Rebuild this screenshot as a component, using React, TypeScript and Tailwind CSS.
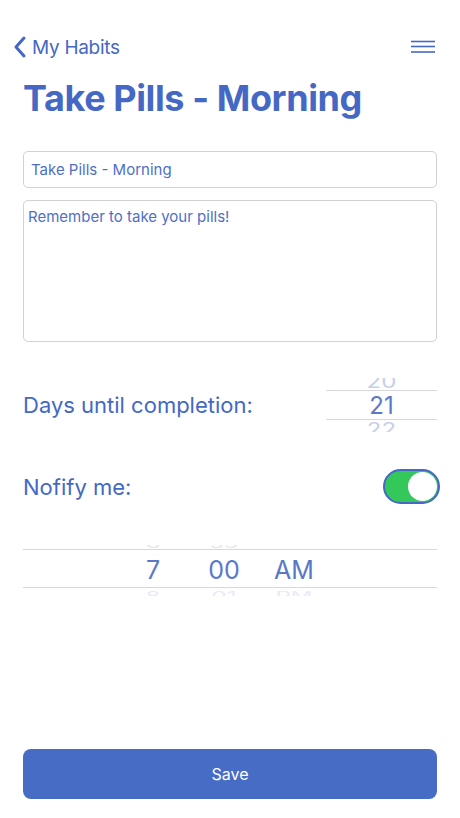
import React, { useState } from "react"

// -------------------------------------------------------------------
// Small pieces
// -------------------------------------------------------------------

function BackChevron() {
  return (
    <svg width="14" height="24" viewBox="0 0 14 24" fill="none">
      <polyline
        points="11,3 3,12 11,21"
        stroke="#4468c4"
        strokeWidth="3"
        strokeLinecap="round"
        strokeLinejoin="round"
      />
    </svg>
  )
}

function MenuIcon() {
  return (
    <svg width="26" height="16" viewBox="0 0 26 16" fill="none">
      <line x1="1" y1="2.5" x2="25" y2="2.5" stroke="#4468c4" strokeWidth="1.6" />
      <line x1="1" y1="7.5" x2="25" y2="7.5" stroke="#4468c4" strokeWidth="1.6" />
      <line x1="1" y1="13" x2="25" y2="13" stroke="#4468c4" strokeWidth="1.6" />
    </svg>
  )
}

function Toggle({ on, onChange }: { on: boolean; onChange: () => void }) {
  return (
    <button
      onClick={onChange}
      className={`flex h-[35px] w-[57px] items-center rounded-full border-2 border-[#4468c4] p-[1px] ${
        on ? "justify-end bg-[#34c759]" : "justify-start bg-[#e5e5ea]"
      }`}
    >
      <span className="block h-[29px] w-[29px] rounded-full bg-white" />
    </button>
  )
}

// --- Wheel picker columns ---------------------------------------------

interface WheelProps {
  prev: string
  current: string
  next: string
  className?: string
}

function Wheel({ prev, current, next, className = "" }: WheelProps) {
  return (
    <div className={`flex flex-col items-center ${className}`}>
      <div className="flex h-[13px] items-end overflow-hidden">
        <span className="origin-bottom scale-y-75 text-[24px] leading-[24px] text-[#c7d0ea]">
          {prev}
        </span>
      </div>
      <div className="flex h-[30px] items-center">
        <span className="text-[24px] leading-[24px] text-[#5a78c8]">{current}</span>
      </div>
      <div className="flex h-[11px] items-start overflow-hidden">
        <span className="origin-top scale-y-75 text-[24px] leading-[24px] text-[#c7d0ea]">
          {next}
        </span>
      </div>
    </div>
  )
}

function TimeCol({ prev, current, next, className = "" }: WheelProps) {
  return (
    <div className={`flex flex-col items-center ${className}`}>
      <div className="flex h-[5px] items-end overflow-hidden">
        <span className="origin-bottom scale-y-50 text-[24px] leading-[24px] text-[#e1e5f3]">
          {prev || "\u00a0"}
        </span>
      </div>
      <div className="flex h-[40px] items-center">
        <span className="text-[25px] leading-[25px] text-[#5a78c8]">{current}</span>
      </div>
      <div className="flex h-[6px] items-start overflow-hidden">
        <span className="origin-top scale-y-50 text-[24px] leading-[24px] text-[#e8ebf6]">
          {next}
        </span>
      </div>
    </div>
  )
}

// -------------------------------------------------------------------
// Component
// -------------------------------------------------------------------

export default function App() {
  const [title, setTitle] = useState("Take Pills - Morning")
  const [notes, setNotes] = useState("Remember to take your pills!")
  const [notify, setNotify] = useState(true)

  return (
    <div className="flex h-[818px] w-[460px] flex-col bg-white font-['Inter','Liberation_Sans',sans-serif] text-[#4468c4]">
      {/* Nav bar */}
      <div className="mt-[35px] flex h-[24px] items-center justify-between pl-[13px] pr-[24px]">
        <div className="flex items-center gap-[5px]">
          <BackChevron />
          <span className="text-[19px] leading-none tracking-[-0.3px]">My Habits</span>
        </div>
        <MenuIcon />
      </div>

      <div className="flex flex-1 flex-col px-[23px]">
        {/* Title */}
        <h1 className="mt-[17px] text-[36px] font-bold leading-[45px] tracking-[-0.4px]">
          Take Pills - Morning
        </h1>

        {/* Name */}
        <input
          value={title}
          onChange={(e) => setTitle(e.target.value)}
          className="mt-[30px] h-[37px] w-full rounded-[5px] border border-[#d1d1d6] px-[7px] text-[15px] text-[#4f6fc6] outline-none"
        />

        {/* Notes */}
        <textarea
          value={notes}
          onChange={(e) => setNotes(e.target.value)}
          className="mt-[12px] h-[142px] w-full resize-none rounded-[5px] border border-[#d1d1d6] px-[4px] py-[7px] text-[15px] leading-[18px] text-[#4f6fc6] outline-none"
        />

        {/* Days until completion */}
        <div className="mt-[35px] flex items-center justify-between">
          <span className="text-[22px] leading-none">Days until completion:</span>
          <div className="relative w-[111px]">
            <div className="pointer-events-none absolute inset-x-0 top-[13px] h-[30px] border-y border-[#d7d7dc]" />
            <Wheel prev="20" current="21" next="22" className="pt-[1px]" />
          </div>
        </div>

        {/* Notify */}
        <div className="mt-[37px] flex items-center justify-between">
          <span className="text-[22px] leading-none">Nofify me:</span>
          <div className="-mr-[3px]">
            <Toggle on={notify} onChange={() => setNotify(!notify)} />
          </div>
        </div>

        {/* Time picker */}
        {notify && (
          <div className="relative mt-[41px]">
            <div className="pointer-events-none absolute inset-x-0 top-[4px] h-[39px] border-y border-[#d7d7dc]" />
            <div className="flex pl-[115px]">
              <TimeCol prev="6" current="7" next="8" className="w-[30px]" />
              <TimeCol prev="59" current="00" next="01" className="ml-[35px] w-[42px]" />
              <TimeCol prev="" current="AM" next="PM" className="ml-[24px] w-[50px]" />
            </div>
          </div>
        )}

        {/* Save */}
        <button className="mb-[19px] mt-auto h-[50px] w-full rounded-[8px] bg-[#476cc6] text-[16px] text-white">
          Save
        </button>
      </div>
    </div>
  )
}
